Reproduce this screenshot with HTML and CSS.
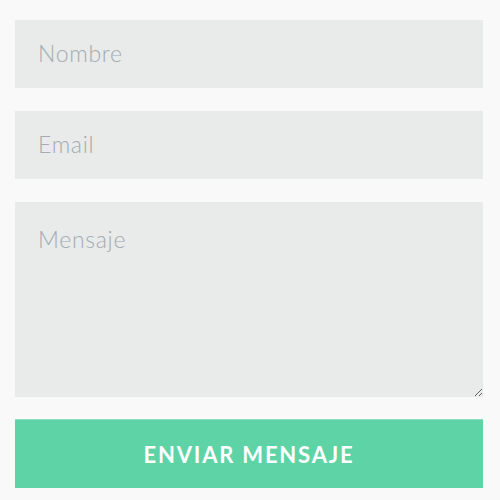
FILE: index.html
```html
<!DOCTYPE html>
<html lang="es">
<head>
<meta charset="utf-8">
<link rel="stylesheet" href="styles.css">
</head>
<body>
<form class="contact">
  <input class="field" type="text" placeholder="Nombre">
  <input class="field" type="email" placeholder="Email">
  <textarea class="field area" placeholder="Mensaje"></textarea>
  <button class="send" type="button">ENVIAR MENSAJE</button>
</form>
</body>
</html>
```

FILE: styles.css
```css
html, body {
  margin: 0;
  padding: 0;
  background: #f9f9f9;
}
.contact {
  display: flex;
  flex-direction: column;
  gap: 23px;
  width: 468px;
  padding: 20px 0 0 15px;
}
.field {
  box-sizing: border-box;
  width: 100%;
  height: 68px;
  margin: 0;
  border: none;
  outline: none;
  background: #e9eaea;
  padding: 0 23px 3px;
  font-family: Lato, "Open Sans", sans-serif;
  font-weight: 300;
  font-size: 23px;
  color: #555;
  display: block;
}
.field::placeholder {
  color: #a2acb1;
  letter-spacing: 0.7px;
}
.area {
  height: 195px;
  padding-top: 23px;
  resize: vertical;
}
.send {
  box-sizing: border-box;
  width: 100%;
  height: 69px;
  margin-top: -1px;
  border: none;
  border-top: 1px solid #8fe0c1;
  background: #5dd3a6;
  color: #fff;
  font-family: Lato, "Open Sans", sans-serif;
  font-weight: 700;
  font-size: 22px;
  letter-spacing: 1.8px;
  cursor: pointer;
}
```
